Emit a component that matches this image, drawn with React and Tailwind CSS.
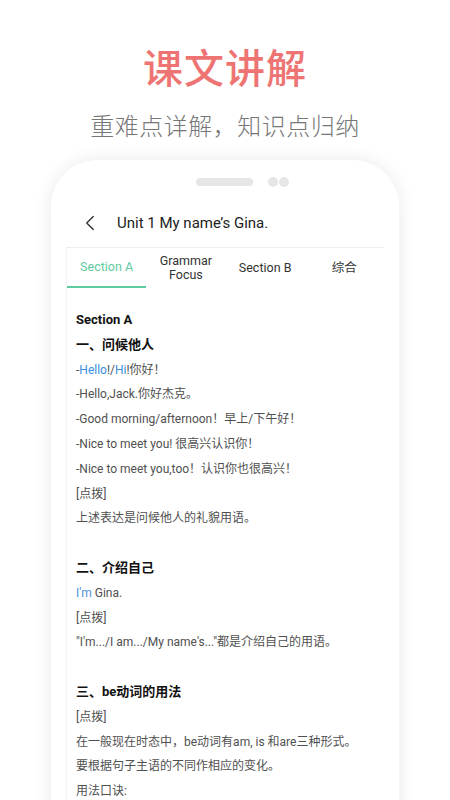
import { ChevronLeft } from 'lucide-react';

const FONT = { fontFamily: 'Roboto, "Noto Sans CJK SC", sans-serif' };

const TABS = ['Section A', 'Grammar Focus', 'Section B', '综合'];

function Line({ children, bold = false }) {
  return (
    <p className={bold ? 'text-[13px] font-bold text-[#111]' : 'text-[12px] text-[#505050]'}>
      {children}
    </p>
  );
}

export default function App() {
  return (
    <div className="h-[800px] w-[450px] overflow-hidden bg-white" style={FONT}>
      {/* Headline */}
      <div className="flex flex-col items-center pt-[49px]">
        <h1 className="text-[40px] font-medium leading-[42px] tracking-[1px] text-[#ee7474]">课文讲解</h1>
        <p className="mt-[22px] text-[24px] font-light leading-[28px] tracking-[0.5px] text-[#777]">
          重难点详解，知识点归纳
        </p>
      </div>

      {/* Phone */}
      <div className="mx-auto mt-[19px] h-[700px] w-[348px] rounded-t-[46px] bg-white px-[15px] shadow-[0_0_18px_rgba(0,0,0,0.09)]">
        <div className="flex items-center justify-center gap-[15px] pl-[35px] pt-[17px]">
          <div className="h-[8px] w-[57px] rounded-full bg-[#e6e6e6]" />
          <div className="flex gap-[1px]">
            <div className="h-[10px] w-[10px] rounded-full bg-[#e6e6e6]" />
            <div className="h-[10px] w-[10px] rounded-full bg-[#e6e6e6]" />
          </div>
        </div>

        {/* Header */}
        <div className="flex h-[61px] items-center border-b border-[#eeeeee] pt-[12px]">
          <ChevronLeft className="ml-[11px] h-[26px] w-[26px] text-[#333]" strokeWidth={1.3} />
          <span className="ml-[14px] text-[15px] text-[#222]">Unit 1 My name’s Gina.</span>
        </div>

        <div className="border-l border-[#f3f3f3]">
          {/* Tabs */}
          <div className="grid h-[40px] grid-cols-4">
            {TABS.map((t, i) => (
              <div
                key={t}
                className={`flex items-center justify-center text-center text-[12.5px] leading-[14px] ${
                  i === 0 ? 'border-b-2 border-[#5dcc9f] text-[#5dcc9f]' : 'text-[#333]'
                }`}
              >
                <span className={i === 1 ? 'w-[60px]' : ''}>{t}</span>
              </div>
            ))}
          </div>

          {/* Content */}
          <div className="pl-[9px] pt-[20px] leading-[24.8px]">
            <Line bold>Section A</Line>
            <Line bold>一、问候他人</Line>
            <Line>
              -<span className="text-[#3a8ee0]">Hello</span>!/<span className="text-[#3a8ee0]">Hi</span>!你好！
            </Line>
            <Line>-Hello,Jack.你好杰克。</Line>
            <Line>-Good morning/afternoon！早上/下午好！</Line>
            <Line>-Nice to meet you! 很高兴认识你！</Line>
            <Line>-Nice to meet you,too！认识你也很高兴！</Line>
            <Line>[点拨]</Line>
            <Line>上述表达是问候他人的礼貌用语。</Line>
            <div className="h-[24.8px]" />
            <Line bold>二、介绍自己</Line>
            <Line>
              <span className="text-[#4a92dc]">I'm</span> Gina.
            </Line>
            <Line>[点拨]</Line>
            <Line>"I'm.../I am.../My name's..."都是介绍自己的用语。</Line>
            <div className="h-[24.8px]" />
            <Line bold>三、be动词的用法</Line>
            <Line>[点拨]</Line>
            <Line>在一般现在时态中，be动词有am, is 和are三种形式。</Line>
            <Line>要根据句子主语的不同作相应的变化。</Line>
            <Line>用法口诀:</Line>
          </div>
        </div>
      </div>
    </div>
  );
}
